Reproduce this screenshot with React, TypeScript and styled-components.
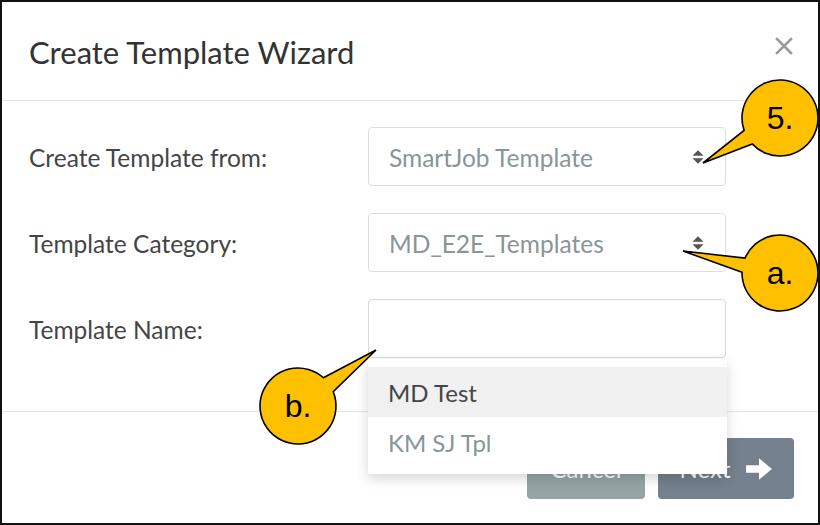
import styled, { createGlobalStyle } from "styled-components";

const GlobalStyle = createGlobalStyle`
  html, body {
    margin: 0;
    padding: 0;
    background: #ffffff;
  }
  * {
    box-sizing: border-box;
  }
`;

type CalloutSpec = {
  label: string;
  cx: number;
  cy: number;
  tip: [number, number];
  from: number; // base start angle, degrees (svg coords)
  to: number; // base end angle
};

const R = 38;

const callouts: CalloutSpec[] = [
  { label: "5.", cx: 780, cy: 118, tip: [703, 163], from: 137, to: 161 },
  { label: "a.", cx: 780, cy: 273, tip: [683, 251], from: 181, to: 203 },
  { label: "b.", cx: 298, cy: 406, tip: [376, 350], from: 312, to: 338 },
];

function calloutPath(c: CalloutSpec) {
  const pt = (deg: number) => {
    const r = (deg * Math.PI) / 180;
    return [c.cx + R * Math.cos(r), c.cy + R * Math.sin(r)];
  };
  const [ax, ay] = pt(c.from);
  const [bx, by] = pt(c.to);
  // A -> tip -> B, then the long way round the circle back to A
  return `M${ax} ${ay} L${c.tip[0]} ${c.tip[1]} L${bx} ${by} A${R} ${R} 0 1 1 ${ax} ${ay} Z`;
}

const fields = [
  { label: "Create Template from:", value: "SmartJob Template", kind: "select" },
  { label: "Template Category:", value: "MD_E2E_Templates", kind: "select" },
  { label: "Template Name:", value: "", kind: "input" },
];

const suggestions = [
  { text: "MD Test", active: true },
  { text: "KM SJ Tpl", active: false },
];

function SortIcon() {
  return (
    <svg width="12" height="14" viewBox="0 0 12 14">
      <path d="M0.5 5.8 L6 0.3 L11.5 5.8 Z" fill="#555" />
      <path d="M0.5 8.2 L11.5 8.2 L6 13.7 Z" fill="#555" />
    </svg>
  );
}

function CloseIcon() {
  return (
    <svg width="20" height="18" viewBox="0 0 20 18">
      <path d="M3 2 L17 16 M17 2 L3 16" stroke="#9b9b9b" strokeWidth="2.6" strokeLinecap="square" />
    </svg>
  );
}

function ArrowIcon() {
  return (
    <svg width="28" height="26" viewBox="0 0 26 24">
      <path d="M1 8.5 H13 V2 L25 12 L13 22 V15.5 H1 Z" fill="#ffffff" />
    </svg>
  );
}

export default function App() {
  return (
    <>
      <GlobalStyle />
      <St.Frame>
        <St.Header>
          <St.Title>Create Template Wizard</St.Title>
          <St.Close>
            <CloseIcon />
          </St.Close>
        </St.Header>

        <St.Body>
          {fields.map((f) => (
            <St.Row key={f.label}>
              <St.Label>{f.label}</St.Label>
              <St.Control>
                {f.kind === "select" ? (
                  <St.Select>
                    <St.SelectText>{f.value}</St.SelectText>
                    <SortIcon />
                  </St.Select>
                ) : (
                  <>
                    <St.Input />
                    <St.Menu>
                      {suggestions.map((s) => (
                        <St.MenuItem key={s.text} $active={s.active}>
                          {s.text}
                        </St.MenuItem>
                      ))}
                    </St.Menu>
                  </>
                )}
              </St.Control>
            </St.Row>
          ))}
        </St.Body>

        <St.Footer>
          <St.Button $tone="cancel">Cancel</St.Button>
          <St.Button $tone="next">
            Next
            <ArrowIcon />
          </St.Button>
        </St.Footer>

        <St.Callouts width="820" height="525" viewBox="0 0 820 525">
          {callouts.map((c) => (
            <g key={c.label}>
              <path d={calloutPath(c)} fill="#ffc000" stroke="#000" strokeWidth="1.6" strokeLinejoin="miter" />
              <text
                x={c.cx}
                y={c.cy + 11}
                textAnchor="middle"
                fontFamily="'Liberation Sans', Arial, sans-serif"
                fontSize="32"
                fill="#000"
              >
                {c.label}
              </text>
            </g>
          ))}
        </St.Callouts>
      </St.Frame>
    </>
  );
}

const St = {
  Frame: styled.div`
    position: relative;
    width: 820px;
    height: 525px;
    border: 2px solid #111;
    background: #ffffff;
    font-family: Lato, "Open Sans", sans-serif;
    overflow: hidden;
  `,
  Header: styled.header`
    height: 99px;
    padding: 2px 24px 0 27px;
    border-bottom: 1px solid #e4e7e9;

    display: flex;
    align-items: center;
    justify-content: space-between;
  `,
  Title: styled.h1`
    margin: 0;
    font-size: 31px;
    font-weight: 400;
    line-height: 1;
    color: #333;
  `,
  Close: styled.span`
    display: flex;
    margin-bottom: 12px;
  `,
  Body: styled.section`
    padding: 26px 0 53px 27px;
    border-bottom: 1px solid #e4e7e9;

    display: flex;
    flex-direction: column;
    gap: 27px;
  `,
  Row: styled.div`
    display: grid;
    grid-template-columns: 339px 358px;
    align-items: center;
    height: 59px;
  `,
  Label: styled.label`
    font-size: 24.5px;
    color: #454545;
    padding-top: 2px;
  `,
  Control: styled.div`
    position: relative;
    height: 100%;
  `,
  Select: styled.div`
    height: 100%;
    border: 1px solid #dbdfe2;
    border-radius: 4px;
    padding: 0 21px 0 20px;

    display: flex;
    align-items: center;
    justify-content: space-between;
  `,
  SelectText: styled.span`
    font-size: 24.5px;
    color: #879696;
    padding-top: 2px;
  `,
  Input: styled.div`
    height: 100%;
    border: 1px solid #d6dbdf;
    border-radius: 4px;
    box-shadow: inset 0 1px 2px rgba(0, 0, 0, 0.05);
  `,
  Menu: styled.ul`
    position: absolute;
    top: 100%;
    left: 0;
    z-index: 5;
    width: 359px;
    margin: 1px 0 0;
    padding: 8px 0 7px;
    list-style: none;
    background: #ffffff;
    box-shadow: 0 5px 12px rgba(0, 0, 0, 0.16);
  `,
  MenuItem: styled.li<{ $active: boolean }>`
    height: 50px;
    padding-left: 20px;

    display: flex;
    align-items: center;

    font-size: 24px;
    color: ${({ $active }) => ($active ? "#454545" : "#879696")};
    background: ${({ $active }) => ($active ? "#f0f0f0" : "transparent")};
  `,
  Footer: styled.footer`
    padding: 26px 24px 0 0;

    display: flex;
    justify-content: flex-end;
    gap: 13px;
  `,
  Button: styled.button<{ $tone: "cancel" | "next" }>`
    height: 61px;
    width: ${({ $tone }) => ($tone === "cancel" ? "118px" : "136px")};
    border: none;
    border-radius: 4px;
    padding: 0 20px 0 20px;

    display: flex;
    align-items: center;
    justify-content: center;
    gap: 14px;

    font-family: inherit;
    font-size: 24px;
    color: #ffffff;
    background: ${({ $tone }) => ($tone === "cancel" ? "#95a5a6" : "#74808d")};
  `,
  Callouts: styled.svg`
    position: absolute;
    top: -2px;
    left: -2px;
    z-index: 10;
    pointer-events: none;
  `,
};
